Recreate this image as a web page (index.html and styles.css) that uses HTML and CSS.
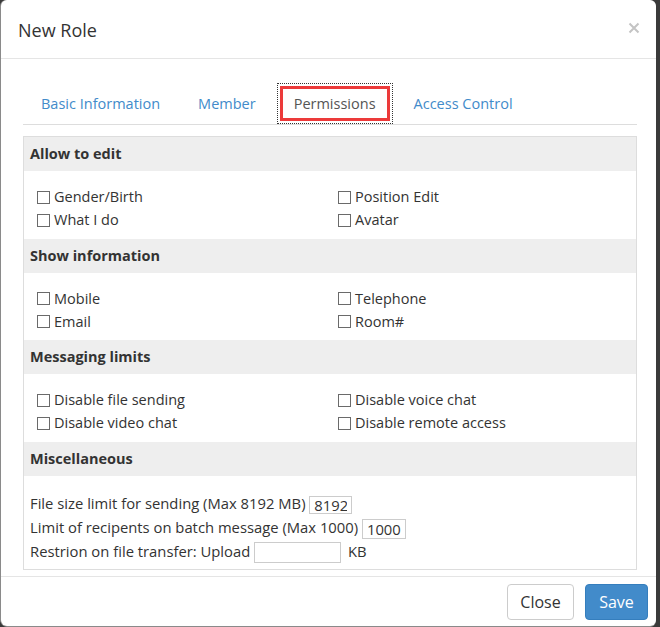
FILE: index.html
```html
<!DOCTYPE html>
<html>
<head>
<meta charset="utf-8">
<link rel="stylesheet" href="styles.css">
</head>
<body>
<div class="modal">
  <div class="modal-header">
    <h4 class="modal-title">New Role</h4>
    <svg class="close" width="12" height="12" viewBox="0 0 12 12"><path d="M1.5 1.5L10.5 10.5M10.5 1.5L1.5 10.5" stroke="#c4c4c4" stroke-width="2" fill="none"/></svg>
  </div>
  <div class="modal-body">
    <ul class="tabs">
      <li class="tab"><a class="tab-link">Basic Information</a></li>
      <li class="tab"><a class="tab-link">Member</a></li>
      <li class="tab active"><a class="tab-link">Permissions</a></li>
      <li class="tab"><a class="tab-link">Access Control</a></li>
    </ul>
    <div class="panel">
      <div class="sec-head">Allow to edit</div>
      <div class="sec-body grid">
        <label class="chk"><input type="checkbox">Gender/Birth</label>
        <label class="chk"><input type="checkbox">Position Edit</label>
        <label class="chk"><input type="checkbox">What I do</label>
        <label class="chk"><input type="checkbox">Avatar</label>
      </div>
      <div class="sec-head">Show information</div>
      <div class="sec-body grid">
        <label class="chk"><input type="checkbox">Mobile</label>
        <label class="chk"><input type="checkbox">Telephone</label>
        <label class="chk"><input type="checkbox">Email</label>
        <label class="chk"><input type="checkbox">Room#</label>
      </div>
      <div class="sec-head">Messaging limits</div>
      <div class="sec-body grid">
        <label class="chk"><input type="checkbox">Disable file sending</label>
        <label class="chk"><input type="checkbox">Disable voice chat</label>
        <label class="chk"><input type="checkbox">Disable video chat</label>
        <label class="chk"><input type="checkbox">Disable remote access</label>
      </div>
      <div class="sec-head">Miscellaneous</div>
      <div class="sec-body misc">
        <div class="misc-row">File size limit for sending (Max 8192 MB) <input class="num n1" type="text" value="8192"></div>
        <div class="misc-row">Limit of recipents on batch message (Max 1000) <input class="num n2" type="text" value="1000"></div>
        <div class="misc-row">Restrion on file transfer: Upload <input class="num n3" type="text" value=""> <span class="unit">KB</span></div>
      </div>
    </div>
  </div>
  <div class="modal-footer">
    <button class="btn btn-default">Close</button>
    <button class="btn btn-primary">Save</button>
  </div>
</div>
</body>
</html>
```
FILE: styles.css
```css
* { box-sizing: border-box; }
html, body { margin: 0; padding: 0; }
body {
  background: #3a3a3a;
  width: 660px;
  height: 627px;
  overflow: hidden;
  font-family: "Open Sans", "Noto Sans", sans-serif;
  font-size: 14.5px;
  color: #333;
}
.modal {
  margin-left: 1px;
  width: 655px;
  height: 626px;
  background: #fff;
  border-radius: 6px;
  box-shadow: -1px 0 0 #8a8a8a, 0 1px 0 #8a8a8a;
  display: flex;
  flex-direction: column;
}
.modal-header {
  padding: 17px 18px 15px 17px;
  border-bottom: 1px solid #e5e5e5;
  display: flex;
  align-items: center;
  justify-content: space-between;
}
.modal-title {
  margin: 0;
  font-weight: normal;
  font-size: 18px;
  line-height: 26px;
  color: #333;
}
.close { margin-right: -2px; margin-top: -4px; }
.modal-body {
  padding: 24px 19px 5px 22px;
  flex: 1;
}
.tabs {
  list-style: none;
  margin: 0;
  padding: 0;
  display: flex;
  border-bottom: 1px solid #ddd;
  height: 42px;
}
.tab { margin: 0 3px 0 1px; }
.tab-link {
  display: block;
  position: relative;
  height: 41px;
  line-height: 41px;
  padding: 0 17px;
  color: #428bca;
  cursor: pointer;
}
.tab.active .tab-link {
  color: #555;
  outline: 1px dotted #333;
  outline-offset: -1px;
}
.tab.active .tab-link::after {
  content: "";
  position: absolute;
  left: 3px; right: 3px; top: 3px; bottom: 3px;
  border: 3px solid #ec3a3a;
}
.panel {
  margin-top: 11px;
  border: 1px solid #ddd;
}
.sec-head {
  height: 34px;
  line-height: 34px;
  background: #eee;
  padding-left: 6px;
  font-weight: bold;
  font-size: 14.5px;
  color: #333;
}
.sec-body { background: #fff; }
.grid {
  display: grid;
  grid-template-columns: 301px auto;
  padding: 14px 13px 7.5px 13px;
}
.chk {
  display: flex;
  align-items: center;
  height: 23px;
  line-height: 23px;
}
.chk input {
  appearance: none;
  -webkit-appearance: none;
  width: 13px;
  height: 13px;
  margin: 1px 4px 0 0;
  border: 1px solid #6a6a6a;
  border-radius: 0;
  background: #fff;
  flex: none;
}
.misc { padding: 15px 6px 6.5px 6px; font-size: 14.8px; }
.misc-row {
  height: 24px;
  line-height: 24px;
  white-space: nowrap;
}
.num {
  font-family: inherit;
  font-size: 14.8px;
  color: #333;
  border: 1px solid #ccc;
  padding: 0 4px;
  margin: 0;
  vertical-align: middle;
  outline: none;
}
.n1 { width: 43px; height: 18px; line-height: 16px; }
.n2 { width: 44px; height: 20px; line-height: 18px; }
.n3 { width: 87px; height: 21px; }
.unit { margin-left: 3px; }
.modal-footer {
  border-top: 1px solid #e5e5e5;
  padding: 7px 8px 6px 0;
  display: flex;
  justify-content: flex-end;
  gap: 11px;
}
.btn {
  height: 36px;
  font-family: inherit;
  font-size: 16px;
  border-radius: 4px;
  padding: 0 12px;
  cursor: pointer;
}
.btn-default {
  width: 67px;
  background: #fff;
  border: 1px solid #ccc;
  color: #333;
}
.btn-primary {
  width: 63px;
  background: #428bca;
  border: 1px solid #357ebd;
  color: #fff;
}
```
